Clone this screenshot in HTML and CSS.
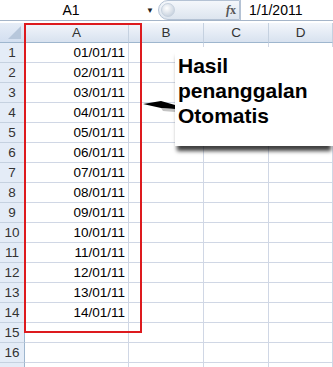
FILE: index.html
```html
<!DOCTYPE html>
<html lang="en">
<head>
  <meta charset="UTF-8" />
  <title>Hasil penanggalan</title>
  <link rel="stylesheet" href="styles.css">
</head>
<body>
  <div class="formula-bar">
    <div class="name-box">A1</div>
    <div class="drop">&#9660;</div>
    <div class="fx-pill">
      <span class="knob"></span>
      <span class="fx"><i>f</i>x</span>
    </div>
    <div class="formula">1/1/2011</div>
  </div>

  <div class="sheet">
    <div class="grid" id="grid">
      <div class="corner"><span></span></div>
      <div class="col-head">A</div>
      <div class="col-head">B</div>
      <div class="col-head">C</div>
      <div class="col-head">D</div>
    </div>

    <div class="highlight"></div>

    <div class="callout">
      <svg class="arrow" width="32" height="14" viewBox="0 0 32 14">
        <polygon points="0,5 18,2 32,6 32,10 18,9" fill="#000"/>
        <polygon points="18,9 32,10 32,13 20,12" fill="#888" opacity="0.5"/>
      </svg>
      <div class="note">Hasil<br>penanggalan<br>Otomatis</div>
    </div>
  </div>

  <script>
    const grid = document.getElementById("grid");
    for (let r = 1; r <= 17; r++) {
      let label = r <= 16 ? r : "";
      let html = '<div class="row-head">' + label + '</div>';
      let date = r <= 14 ? String(r).padStart(2, "0") + "/01/11" : "";
      html += '<div class="cell date">' + date + '</div>';
      html += '<div class="cell"></div><div class="cell"></div><div class="cell"></div>';
      grid.insertAdjacentHTML("beforeend", html);
    }
  </script>
</body>
</html>
```

FILE: styles.css
```css
body {
  margin: 0;
  width: 333px;
  height: 367px;
  overflow: hidden;
  background: #fff;
  font-family: 'Liberation Sans', Arial, sans-serif;
  color: #000;
}
.formula-bar {
  display: flex;
  align-items: center;
  height: 20px;
  border-bottom: 1px solid #a5b5c9;
  background: #fff;
  font-size: 14px;
}
.name-box {
  width: 142px;
  text-align: center;
}
.drop {
  width: 16px;
  font-size: 8px;
  color: #222;
  padding-left: 4px;
  box-sizing: border-box;
}
.fx-pill {
  width: 82px;
  height: 20px;
  display: flex;
  align-items: center;
  justify-content: space-between;
  box-sizing: border-box;
  border: 1px solid #b4c2d4;
  border-radius: 10px 0 0 10px;
  background: linear-gradient(#f4f7fb, #dde5ef);
}
.knob {
  width: 12px;
  height: 12px;
  margin-left: 2px;
  border-radius: 50%;
  background: radial-gradient(circle at 40% 35%, #fff, #b9c6d6);
  border: 1px solid #c6d1de;
}
.fx {
  font-family: 'Liberation Serif', serif;
  font-weight: bold;
  font-size: 12px;
  color: #555;
  padding-right: 3px;
}
.fx i {
  font-style: italic;
}
.formula {
  flex: 1;
  padding-left: 8px;
  border-left: 1px solid #b4c2d4;
  height: 20px;
  line-height: 20px;
}
.sheet {
  position: relative;
  margin-top: 2px;
}
.grid {
  display: grid;
  grid-template-columns: 25px 104px 75px 65px 64px;
  grid-auto-rows: 20px;
  font-size: 13.5px;
}
.corner {
  background: linear-gradient(#e6edf7, #d3dff0);
  border-right: 1px solid #9eb6ce;
  border-bottom: 1px solid #9eb6ce;
  position: relative;
}
.corner span {
  position: absolute;
  right: 3px;
  bottom: 3px;
  width: 0;
  height: 0;
  border-left: 13px solid transparent;
  border-bottom: 13px solid #b7c7db;
}
.col-head {
  background: linear-gradient(#f3f6fb 0%, #e4ebf5 55%, #d8e2ef 100%);
  border-right: 1px solid #c5d1e0;
  border-bottom: 1px solid #9eb6ce;
  text-align: center;
  line-height: 20px;
  color: #333;
}
.row-head {
  background: #e4ecf7;
  border-right: 1px solid #9eb6ce;
  border-bottom: 1px solid #c5d1e0;
  text-align: center;
  line-height: 20px;
  color: #333;
}
.cell {
  border-right: 1px solid #d0d7e5;
  border-bottom: 1px solid #d0d7e5;
  line-height: 20px;
}
.date {
  text-align: right;
  padding-right: 3px;
}
.highlight {
  position: absolute;
  left: 24px;
  top: 0;
  width: 114px;
  height: 306px;
  border: 2px solid #dd1a1e;
}
.callout {
  position: absolute;
  left: 143px;
  top: 24px;
  display: flex;
  align-items: flex-start;
}
.arrow {
  margin-top: 52px;
}
.note {
  width: 158px;
  height: 99px;
  padding: 6px 0 0 3px;
  box-sizing: border-box;
  background: #fff;
  font-weight: bold;
  font-size: 21px;
  line-height: 25px;
  box-shadow: 0 7px 4px -2px rgba(0, 0, 0, 0.75);
}
```
